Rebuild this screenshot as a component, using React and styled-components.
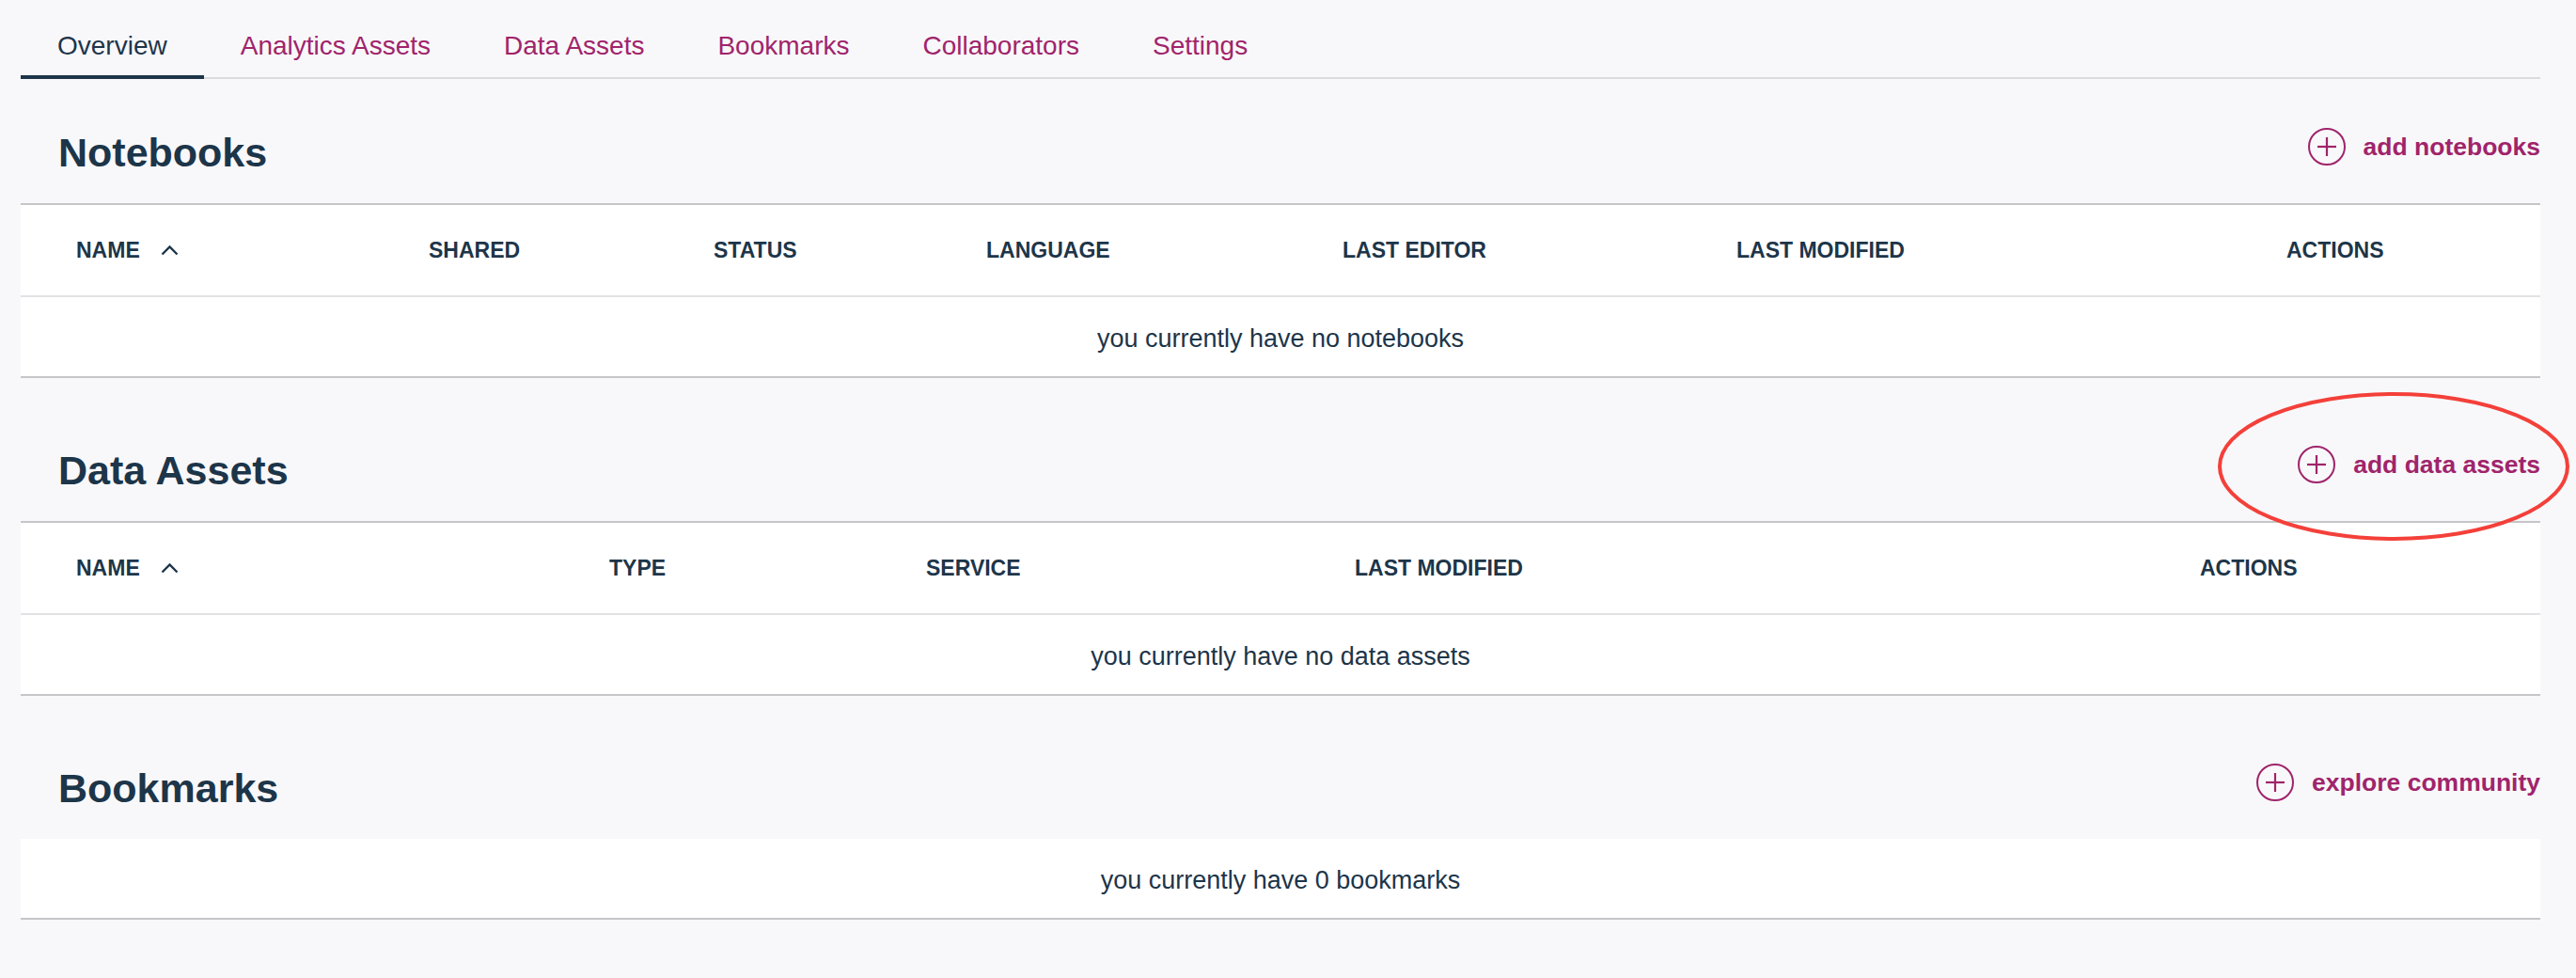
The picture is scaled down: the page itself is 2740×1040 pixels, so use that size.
import styled, { createGlobalStyle } from "styled-components";

const navy = "#1d3549";
const magenta = "#a0246b";

const GlobalStyle = createGlobalStyle`
  html, body {
    margin: 0;
    background: #f8f8fa;
  }
  body {
    font-family: "Liberation Sans", Arial, Helvetica, sans-serif;
    color: ${navy};
  }
`;

const Page = styled.div`
  padding: 0 38px 40px 22px;
`;

const TabBar = styled.nav`
  display: flex;
  border-bottom: 2px solid #dcdcde;
`;

const Tab = styled.a`
  padding: 33px 39px 15px;
  margin-bottom: -2px;
  font-size: 28px;
  line-height: 32px;
  text-decoration: none;
  cursor: pointer;
  color: ${(p) => (p.$active ? navy : magenta)};
  border-bottom: 4px solid ${(p) => (p.$active ? navy : "transparent")};
`;

const Section = styled.section`
  & + & {
    margin-top: 20px;
  }
`;

const SectionHead = styled.div`
  position: relative;
  display: flex;
  align-items: center;
  justify-content: space-between;
  height: 52px;
  padding: 52px 0 28px 40px;
`;

const Heading = styled.h2`
  margin: 0;
  font-size: 43px;
  line-height: 52px;
  font-weight: bold;
  color: ${navy};
`;

const AddLink = styled.a`
  display: flex;
  align-items: center;
  gap: 19px;
  margin-bottom: 12px;
  font-size: 26.5px;
  line-height: 40px;
  font-weight: bold;
  color: ${magenta};
  text-decoration: none;
  cursor: pointer;
`;

const Annotation = styled.svg`
  position: absolute;
  top: -5px;
  right: -31px;
  pointer-events: none;
`;

const Table = styled.div`
  background: #fff;
  border-top: ${(p) => (p.$noTop ? "none" : "2px solid #c6c6c8")};
  border-bottom: 2px solid #c6c6c8;
`;

const HeadRow = styled.div`
  display: grid;
  grid-template-columns: ${(p) => p.$cols};
  align-items: center;
  height: 96px;
  padding-left: 59px;
  border-bottom: 2px solid #e2e2e4;
`;

const HeadCell = styled.div`
  display: flex;
  align-items: center;
  gap: 22px;
  font-size: 23px;
  font-weight: bold;
  color: ${navy};
`;

const EmptyRow = styled.div`
  display: flex;
  align-items: center;
  justify-content: center;
  height: 79px;
  padding-top: 5px;
  font-size: 27px;
  color: ${navy};
`;

const SortCaret = () => (
  <svg width="19" height="12" viewBox="0 0 19 12">
    <polyline points="1.5,10.5 9.5,2.5 17.5,10.5" fill="none" stroke={navy} strokeWidth="2.4" />
  </svg>
);

const PlusCircle = () => (
  <svg width="40" height="40" viewBox="0 0 40 40">
    <circle cx="20" cy="20" r="19" fill="none" stroke={magenta} strokeWidth="2" />
    <line x1="10" y1="20" x2="30" y2="20" stroke={magenta} strokeWidth="2.2" />
    <line x1="20" y1="10" x2="20" y2="30" stroke={magenta} strokeWidth="2.2" />
  </svg>
);

const tabs = ["Overview", "Analytics Assets", "Data Assets", "Bookmarks", "Collaborators", "Settings"];

const sections = [
  {
    title: "Notebooks",
    action: "add notebooks",
    cols: "375px 303px 290px 379px 419px 585px 1fr",
    columns: ["NAME", "SHARED", "STATUS", "LANGUAGE", "LAST EDITOR", "LAST MODIFIED", "ACTIONS"],
    empty: "you currently have no notebooks",
  },
  {
    title: "Data Assets",
    action: "add data assets",
    cols: "567px 337px 456px 899px 1fr",
    columns: ["NAME", "TYPE", "SERVICE", "LAST MODIFIED", "ACTIONS"],
    empty: "you currently have no data assets",
    circled: true,
  },
  {
    title: "Bookmarks",
    action: "explore community",
    empty: "you currently have 0 bookmarks",
  },
];

const App = () => {
  return (
    <Page>
      <GlobalStyle />
      <TabBar>
        {tabs.map((tab, i) => (
          <Tab key={tab} $active={i === 0}>
            {tab}
          </Tab>
        ))}
      </TabBar>
      {sections.map((section) => (
        <Section key={section.title}>
          <SectionHead>
            <Heading>{section.title}</Heading>
            <AddLink>
              <PlusCircle />
              {section.action}
            </AddLink>
            {section.circled && (
              <Annotation width="374" height="158" viewBox="0 0 374 158">
                <ellipse cx="187" cy="79" rx="185" ry="77" fill="none" stroke="#f4403a" strokeWidth="4" />
              </Annotation>
            )}
          </SectionHead>
          <Table $noTop={!section.columns}>
            {section.columns && (
              <HeadRow $cols={section.cols}>
                {section.columns.map((col, i) => (
                  <HeadCell key={col}>
                    {col}
                    {i === 0 && <SortCaret />}
                  </HeadCell>
                ))}
              </HeadRow>
            )}
            <EmptyRow>{section.empty}</EmptyRow>
          </Table>
        </Section>
      ))}
    </Page>
  );
};

export default App;
